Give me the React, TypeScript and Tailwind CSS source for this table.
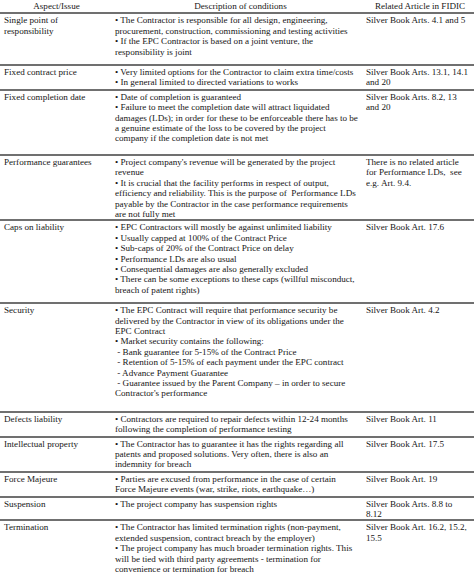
import React from "react";

type Row = { a: string[]; d: string[]; r: string[]; pb: string };

const rows: Row[] = [
  {
    a: ["Single point of", "responsibility"],
    d: [
      "• The Contractor is responsible for all design, engineering,",
      "procurement, construction, commissioning and testing activities",
      "• If the EPC Contractor is based on a joint venture, the",
      "responsibility is joint",
    ],
    r: ["Silver Book Arts. 4.1 and 5"],
    pb: "pb-[7px]",
  },
  {
    a: ["Fixed contract price"],
    d: [
      "• Very limited options for the Contractor to claim extra time/costs",
      "• In general limited to directed variations to works",
    ],
    r: ["Silver Book Arts. 13.1, 14.1", "and 20"],
    pb: "pb-[1px]",
  },
  {
    a: ["Fixed completion date"],
    d: [
      "• Date of completion is guaranteed",
      "• Failure to meet the completion date will attract liquidated",
      "damages (LDs); in order for these to be enforceable there has to be",
      "a genuine estimate of the loss to be covered by the project",
      "company if the completion date is not met",
    ],
    r: ["Silver Book Arts. 8.2, 13", "and 20"],
    pb: "pb-[10px]",
  },
  {
    a: ["Performance guarantees"],
    d: [
      "• Project company's revenue will be generated by the project",
      "revenue",
      "• It is crucial that the facility performs in respect of output,",
      "efficiency and reliability. This is the purpose of  Performance LDs",
      "payable by the Contractor in the case performance requirements",
      "are not fully met",
    ],
    r: ["There is no related article", "for Performance LDs,  see", "e.g. Art. 9.4."],
    pb: "pb-0",
  },
  {
    a: ["Caps on liability"],
    d: [
      "• EPC Contractors will mostly be against unlimited liability",
      "• Usually capped at 100% of the Contract Price",
      "• Sub-caps of 20% of the Contract Price on delay",
      "• Performance LDs are also usual",
      "• Consequential damages are also generally excluded",
      "• There can be some exceptions to these caps (willful misconduct,",
      "breach of patent rights)",
    ],
    r: ["Silver Book Art. 17.6"],
    pb: "pb-[7px]",
  },
  {
    a: ["Security"],
    d: [
      "• The EPC Contract will require that performance security be",
      "delivered by the Contractor in view of its obligations under the",
      "EPC Contract",
      "• Market security contains the following:",
      " - Bank guarantee for 5-15% of the Contract Price",
      " - Retention of 5-15% of each payment under the EPC contract",
      " - Advance Payment Guarantee",
      " - Guarantee issued by the Parent Company – in order to secure",
      "Contractor's performance",
    ],
    r: ["Silver Book Art. 4.2"],
    pb: "pb-[12px]",
  },
  {
    a: ["Defects liability"],
    d: [
      "• Contractors are required to repair defects within 12-24 months",
      "following the completion of performance testing",
    ],
    r: ["Silver Book Art. 11"],
    pb: "pb-[1px]",
  },
  {
    a: ["Intellectual property"],
    d: [
      "• The Contractor has to guarantee it has the rights regarding all",
      "patents and proposed solutions. Very often, there is also an",
      "indemnity for breach",
    ],
    r: ["Silver Book Art. 17.5"],
    pb: "pb-[1px]",
  },
  {
    a: ["Force Majeure"],
    d: [
      "• Parties are excused from performance in the case of certain",
      "Force Majeure events (war, strike, riots, earthquake…)",
    ],
    r: ["Silver Book Art. 19"],
    pb: "pb-[1px]",
  },
  {
    a: ["Suspension"],
    d: ["• The project company has suspension rights"],
    r: ["Silver Book Arts. 8.8 to", "8.12"],
    pb: "pb-0",
  },
  {
    a: ["Termination"],
    d: [
      "• The Contractor has limited termination rights (non-payment,",
      "extended suspension, contract breach by the employer)",
      "• The project company has much broader termination rights. This",
      "will be tied with third party agreements - termination for",
      "convenience or termination for breach",
    ],
    r: ["Silver Book Art. 16.2, 15.2,", "15.5"],
    pb: "pb-0",
  },
];

function Lines({ lines }: { lines: string[] }) {
  return (
    <div>
      {lines.map((l, i) => (
        <div key={i} className="whitespace-pre">
          {l}
        </div>
      ))}
    </div>
  );
}

export default function App() {
  return (
    <div
      className="w-[474px] h-[577px] bg-white text-[#151515] text-[9.1px] leading-[10.4px] overflow-hidden"
      style={{ fontFamily: '"Liberation Serif", "Times New Roman", serif' }}
    >
      <div className="grid grid-cols-[115px_251px_108px] pb-[1px]">
        <div className="text-center pt-[1px] pr-[2px]">Aspect/Issue</div>
        <div className="text-center pt-[1px]">Description of conditions</div>
        <div className="text-center pt-[1px]">Related Article in FIDIC</div>
      </div>
      {rows.map((row, i) => (
        <div
          key={i}
          className={`grid grid-cols-[115px_251px_108px] border-t-2 border-[#707070] pt-[1px] ${row.pb}`}
        >
          <div className="pl-[4px]">
            <Lines lines={row.a} />
          </div>
          <div>
            <Lines lines={row.d} />
          </div>
          <div>
            <Lines lines={row.r} />
          </div>
        </div>
      ))}
    </div>
  );
}
